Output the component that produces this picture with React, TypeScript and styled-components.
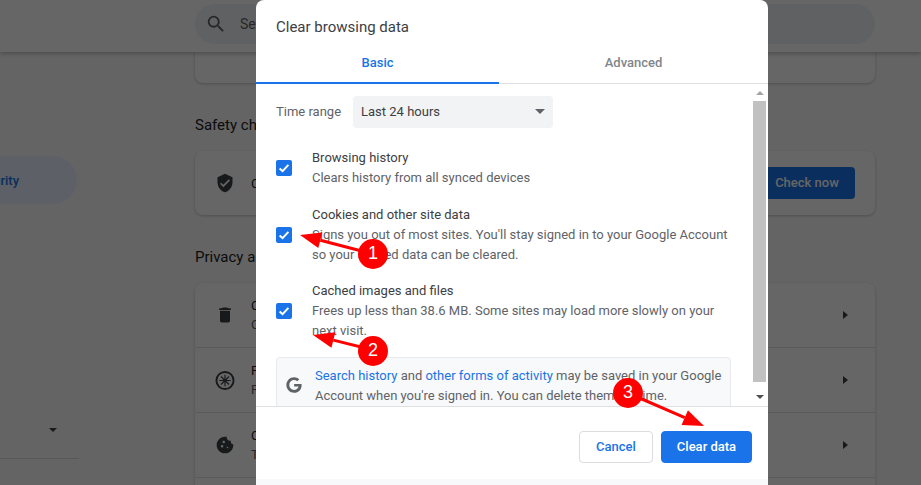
import styled, { createGlobalStyle } from "styled-components";
import { FaGoogle } from "react-icons/fa";
import {
  MdCookie,
  MdDelete,
  MdSearch,
  MdVerifiedUser,
} from "react-icons/md";

const GlobalStyle = createGlobalStyle`
  html, body {
    margin: 0;
    padding: 0;
    height: 100%;
    overflow: hidden;
  }
  * {
    box-sizing: border-box;
  }
  body {
    font-family: Roboto, "Liberation Sans", sans-serif;
    font-size: 13px;
    color: #202124;
  }
`;

const Page = styled.div`
  position: relative;
  width: 921px;
  height: 485px;
  overflow: hidden;
  background: #fbfbfb;
`;
const Header = styled.header`
  position: relative;
  z-index: 2;
  display: flex;
  align-items: flex-start;
  height: 52px;
  padding: 4px 0 0 195px;
  background: #fff;
  box-shadow: 0 2px 4px rgba(60, 64, 67, 0.3);
`;
const SearchBox = styled.div`
  display: flex;
  align-items: center;
  gap: 13px;
  width: 680px;
  height: 40px;
  padding-left: 10px;
  border-radius: 20px;
  background: #f1f3f4;
  color: #5f6368;
  font-size: 14px;

  svg {
    font-size: 22px;
  }
`;
const Layout = styled.div`
  display: flex;
`;
const Sidebar = styled.nav`
  display: flex;
  flex-direction: column;
  width: 195px;
  padding-top: 104px;
`;
const ActiveItem = styled.div`
  display: flex;
  align-items: center;
  justify-content: flex-end;
  width: 77px;
  height: 48px;
  padding-right: 58px;
  border-radius: 0 24px 24px 0;
  background: #e8f0fe;
  color: #1a73e8;
  font-size: 13px;
  font-weight: 500;
  white-space: nowrap;
  overflow: hidden;
`;
const SideCaret = styled.div`
  display: flex;
  justify-content: flex-end;
  width: 57px;
  height: 32px;
  margin-top: 222px;
  padding-top: 2px;

  &::after {
    content: "";
    width: 0;
    height: 0;
    border-left: 4px solid transparent;
    border-right: 4px solid transparent;
    border-top: 4px solid #3c4043;
  }
`;
const SideRule = styled.div`
  width: 79px;
  height: 1px;
  background: #dadce0;
`;
const Content = styled.main`
  display: flex;
  flex-direction: column;
  width: 680px;
`;
const Card = styled.section<{ $height?: number }>`
  display: flex;
  flex-direction: column;
  height: ${(props) => (props.$height ? `${props.$height}px` : "auto")};
  border-radius: 8px;
  background: #fff;
  box-shadow: 0 1px 3px rgba(60, 64, 67, 0.3);
`;
const TopCard = styled(Card)`
  border-radius: 0 0 8px 8px;
`;
const SectionTitle = styled.h2`
  margin: 35px 0 18px;
  height: 15px;
  font-size: 15px;
  line-height: 15px;
  font-weight: 400;
  white-space: nowrap;
`;
const SafetyRow = styled.div`
  display: flex;
  align-items: center;
  height: 64px;
  padding: 0 20px;
`;
const RowIcon = styled.span`
  display: flex;
  align-items: center;
  justify-content: center;
  width: 20px;
  margin-right: 16px;
  color: #3c4043;
  font-size: 20px;
`;
const RowText = styled.div`
  flex: 1;
  line-height: 19px;
  white-space: nowrap;
  overflow: hidden;
`;
const RowSub = styled.div`
  color: #5f6368;
`;
const CheckButton = styled.button`
  width: 96px;
  height: 32px;
  flex: none;
  padding: 0 0 2px;
  border: none;
  border-radius: 4px;
  background: #1a73e8;
  color: #fff;
  font: 500 13px Roboto, sans-serif;
`;
const ListRow = styled.div`
  display: flex;
  align-items: center;
  height: 65px;
  padding: 0 27px 0 20px;
  border-top: 1px solid #e4e4e4;

  &:first-child {
    border-top: none;
    height: 64px;
  }
`;
const RowCaret = styled.span`
  width: 0;
  height: 0;
  border-top: 4.5px solid transparent;
  border-bottom: 4.5px solid transparent;
  border-left: 5px solid #3c4043;
`;

const Scrim = styled.div`
  position: absolute;
  inset: 0;
  z-index: 3;
  background: rgba(0, 0, 0, 0.6);
`;
const Dialog = styled.div`
  position: absolute;
  z-index: 4;
  top: 0;
  left: 256px;
  display: flex;
  flex-direction: column;
  width: 512px;
  height: 485px;
  border-radius: 8px 8px 0 0;
  background: #fff;
`;
const DialogTitle = styled.h1`
  margin: 0;
  height: 54px;
  padding: 19px 20px 0;
  color: #3c4043;
  font-size: 15px;
  line-height: 17px;
  font-weight: 400;
`;
const Tabs = styled.div`
  display: grid;
  grid-template-columns: 243px 1fr;
  height: 30px;
  border-bottom: 1px solid #e0e0e0;
  flex: none;
`;
const Tab = styled.div<{ $active?: boolean }>`
  height: ${(props) => (props.$active ? "30px" : "29px")};
  text-align: center;
  padding-top: 1px;
  font-size: 13px;
  line-height: 15px;
  font-weight: 500;
  color: ${(props) => (props.$active ? "#1a73e8" : "#80868b")};
  border-bottom: ${(props) => (props.$active ? "2px solid #1a73e8" : "none")};
`;
const Body = styled.div`
  display: flex;
  height: 322px;
  flex: none;
  overflow: hidden;
`;
const BodyInner = styled.div`
  flex: 1;
  padding: 12px 21px 0 20px;
  overflow: hidden;
`;
const RangeRow = styled.div`
  display: flex;
  align-items: center;
  height: 32px;
  gap: 12px;
  margin-bottom: 20px;
  padding-bottom: 1px;
  color: #5f6368;
`;
const RangeSelect = styled.div`
  display: flex;
  align-items: center;
  justify-content: space-between;
  width: 200px;
  height: 32px;
  flex: none;
  padding: 0 8px 1px;
  border-radius: 4px;
  background: #f1f3f4;
  color: #3c4043;

  &::after {
    content: "";
    width: 0;
    height: 0;
    border-left: 5px solid transparent;
    border-right: 5px solid transparent;
    border-top: 5px solid #5f6368;
  }
`;
const Option = styled.div<{ $height: number; $top: number }>`
  display: flex;
  align-items: center;
  height: ${(props) => props.$height}px;
  margin-top: ${(props) => props.$top}px;
  line-height: 20px;
`;
const CheckBox = styled.span`
  display: flex;
  align-items: center;
  justify-content: center;
  flex: none;
  width: 16px;
  height: 16px;
  margin-right: 20px;
  border-radius: 2px;
  background: #1a73e8;
`;
const OptionTitle = styled.div`
  color: #3c4043;
`;
const OptionDesc = styled.div`
  color: #5f6368;
`;
const InfoBox = styled.div`
  display: flex;
  align-items: flex-start;
  flex: none;
  width: 455px;
  height: 70px;
  margin-top: 16px;
  padding: 8px 8px 0 9px;
  border: 1px solid #e8eaed;
  border-radius: 4px;
  background: #f8f9fa;
  color: #5f6368;
  line-height: 20px;
`;
const InfoIcon = styled.span`
  display: flex;
  flex: none;
  width: 29px;
  padding-top: 11px;
  font-size: 16px;
`;
const InfoLink = styled.a`
  color: #1a73e8;
`;
const ScrollTrack = styled.div`
  display: flex;
  flex-direction: column;
  align-items: center;
  flex: none;
  width: 16px;
  padding: 0 2px 0 1px;
  background: #fff;
`;
const ScrollArrow = styled.div<{ $up?: boolean; $tone: string }>`
  display: flex;
  align-items: center;
  justify-content: center;
  width: 13px;
  height: 17px;
  flex: none;
  margin-top: ${(props) => (props.$up ? "0" : "6px")};

  &::after {
    content: "";
    width: 0;
    height: 0;
    border-left: 4px solid transparent;
    border-right: 4px solid transparent;
    ${(props) =>
      props.$up
        ? `border-bottom: 4px solid ${props.$tone};`
        : `border-top: 4px solid ${props.$tone};`}
  }
`;
const ScrollThumb = styled.div`
  width: 13px;
  height: 281px;
  flex: none;
  background: #c1c1c1;
`;
const Footer = styled.div`
  display: flex;
  justify-content: flex-end;
  gap: 8px;
  height: 73px;
  flex: none;
  padding: 24px 16px 0 0;
  border-top: 1px solid #e0e0e0;
`;
const DialogButton = styled.button<{ $primary?: boolean }>`
  height: 32px;
  width: ${(props) => (props.$primary ? "91px" : "74px")};
  padding: 0 0 2px;
  border: 1px solid ${(props) => (props.$primary ? "#1a73e8" : "#dadce0")};
  border-radius: 4px;
  background: ${(props) => (props.$primary ? "#1a73e8" : "#fff")};
  color: ${(props) => (props.$primary ? "#fff" : "#1a73e8")};
  font: 500 13px Roboto, sans-serif;
`;
const DialogEdge = styled.div`
  flex: 1;
  background: #f8f9fa;
`;

const Marks = styled.svg`
  position: absolute;
  z-index: 5;
  top: 0;
  left: 0;
  pointer-events: none;
`;
const StepBadge = styled.div<{ $x: number; $y: number }>`
  position: absolute;
  z-index: 6;
  left: ${(props) => props.$x - 15}px;
  top: ${(props) => props.$y - 15}px;
  width: 30px;
  height: 30px;
  border-radius: 50%;
  background: #f00;
  color: #fff;
  font-family: "Liberation Sans", Arial, sans-serif;
  font-size: 18px;
  line-height: 29px;
  text-align: center;
`;

const Tick = () => (
  <svg width="12" height="12" viewBox="0 0 12 12" fill="none">
    <path d="M1.6 6.4 4.6 9.2 10.4 2.9" stroke="#fff" strokeWidth="2" />
  </svg>
);

const WheelIcon = () => (
  <svg width="21" height="21" viewBox="0 0 21 21" fill="none" stroke="currentColor">
    <circle cx="10.5" cy="10.5" r="9" strokeWidth="2" />
    <path
      d="M10.5 4.5v12M4.5 10.5h12M6.3 6.3l8.4 8.4M14.7 6.3l-8.4 8.4"
      strokeWidth="1.2"
    />
    <circle cx="10.5" cy="10.5" r="1.8" fill="currentColor" stroke="none" />
  </svg>
);

const arrows = [
  { tail: [373, 254], tip: [300, 235] },
  { tail: [373, 350], tip: [313, 335] },
  { tail: [628, 393], tip: [704, 426] },
];

const Arrow = ({ tail, tip }: { tail: number[]; tip: number[] }) => {
  const dx = tail[0] - tip[0];
  const dy = tail[1] - tip[1];
  const len = Math.hypot(dx, dy);
  const ux = dx / len;
  const uy = dy / len;
  const bx = tip[0] + ux * 21;
  const by = tip[1] + uy * 21;
  const head = [
    `${tip[0]},${tip[1]}`,
    `${bx - uy * 8},${by + ux * 8}`,
    `${bx + uy * 8},${by - ux * 8}`,
  ].join(" ");
  return (
    <g>
      <line x1={tail[0]} y1={tail[1]} x2={bx} y2={by} stroke="#f00" strokeWidth="3" />
      <polygon points={head} fill="#f00" />
    </g>
  );
};

function App() {
  return (
    <Page>
      <GlobalStyle />
      <Header>
        <SearchBox>
          <MdSearch />
          Search settings
        </SearchBox>
      </Header>
      <Layout>
        <Sidebar>
          <ActiveItem>Privacy and security</ActiveItem>
          <SideCaret />
          <SideRule />
        </Sidebar>
        <Content>
          <TopCard $height={31} />
          <SectionTitle>Safety check</SectionTitle>
          <Card>
            <SafetyRow>
              <RowIcon>
                <MdVerifiedUser />
              </RowIcon>
              <RowText>Chrome can help keep you safe from data breaches</RowText>
              <CheckButton>Check now</CheckButton>
            </SafetyRow>
          </Card>
          <SectionTitle>Privacy and security</SectionTitle>
          <Card>
            <ListRow>
              <RowIcon>
                <MdDelete />
              </RowIcon>
              <RowText>
                Clear browsing data
                <RowSub>Clear history, cookies, cache, and more</RowSub>
              </RowText>
              <RowCaret />
            </ListRow>
            <ListRow>
              <RowIcon>
                <WheelIcon />
              </RowIcon>
              <RowText>
                Privacy Guide
                <RowSub>Review key privacy and security controls</RowSub>
              </RowText>
              <RowCaret />
            </ListRow>
            <ListRow>
              <RowIcon>
                <MdCookie />
              </RowIcon>
              <RowText>
                Cookies and other site data
                <RowSub>Third-party cookies are blocked in Incognito mode</RowSub>
              </RowText>
              <RowCaret />
            </ListRow>
            <ListRow />
          </Card>
        </Content>
      </Layout>
      <Scrim />
      <Dialog>
        <DialogTitle>Clear browsing data</DialogTitle>
        <Tabs>
          <Tab $active>Basic</Tab>
          <Tab>Advanced</Tab>
        </Tabs>
        <Body>
          <BodyInner>
            <RangeRow>
              Time range
              <RangeSelect>Last 24 hours</RangeSelect>
            </RangeRow>
            <Option $height={40} $top={0}>
              <CheckBox>
                <Tick />
              </CheckBox>
              <div>
                <OptionTitle>Browsing history</OptionTitle>
                <OptionDesc>Clears history from all synced devices</OptionDesc>
              </div>
            </Option>
            <Option $height={60} $top={17}>
              <CheckBox>
                <Tick />
              </CheckBox>
              <div>
                <OptionTitle>Cookies and other site data</OptionTitle>
                <OptionDesc>
                  Signs you out of most sites. You'll stay signed in to your Google Account
                  so your synced data can be cleared.
                </OptionDesc>
              </div>
            </Option>
            <Option $height={60} $top={16}>
              <CheckBox>
                <Tick />
              </CheckBox>
              <div>
                <OptionTitle>Cached images and files</OptionTitle>
                <OptionDesc>
                  Frees up less than 38.6 MB. Some sites may load more slowly on your
                  next visit.
                </OptionDesc>
              </div>
            </Option>
            <InfoBox>
              <InfoIcon>
                <FaGoogle />
              </InfoIcon>
              <div>
                <InfoLink>Search history</InfoLink> and{" "}
                <InfoLink>other forms of activity</InfoLink> may be saved in your Google
                Account when you're signed in. You can delete them anytime.
              </div>
            </InfoBox>
          </BodyInner>
          <ScrollTrack>
            <ScrollArrow $up $tone="#a3a3a3" />
            <ScrollThumb />
            <ScrollArrow $tone="#505050" />
          </ScrollTrack>
        </Body>
        <Footer>
          <DialogButton>Cancel</DialogButton>
          <DialogButton $primary>Clear data</DialogButton>
        </Footer>
        <DialogEdge />
      </Dialog>
      <Marks width="921" height="485">
        {arrows.map((arrow) => (
          <Arrow key={arrow.tip[0]} tail={arrow.tail} tip={arrow.tip} />
        ))}
      </Marks>
      <StepBadge $x={373} $y={254}>1</StepBadge>
      <StepBadge $x={373} $y={351}>2</StepBadge>
      <StepBadge $x={628} $y={393}>3</StepBadge>
    </Page>
  );
}

export default App;
